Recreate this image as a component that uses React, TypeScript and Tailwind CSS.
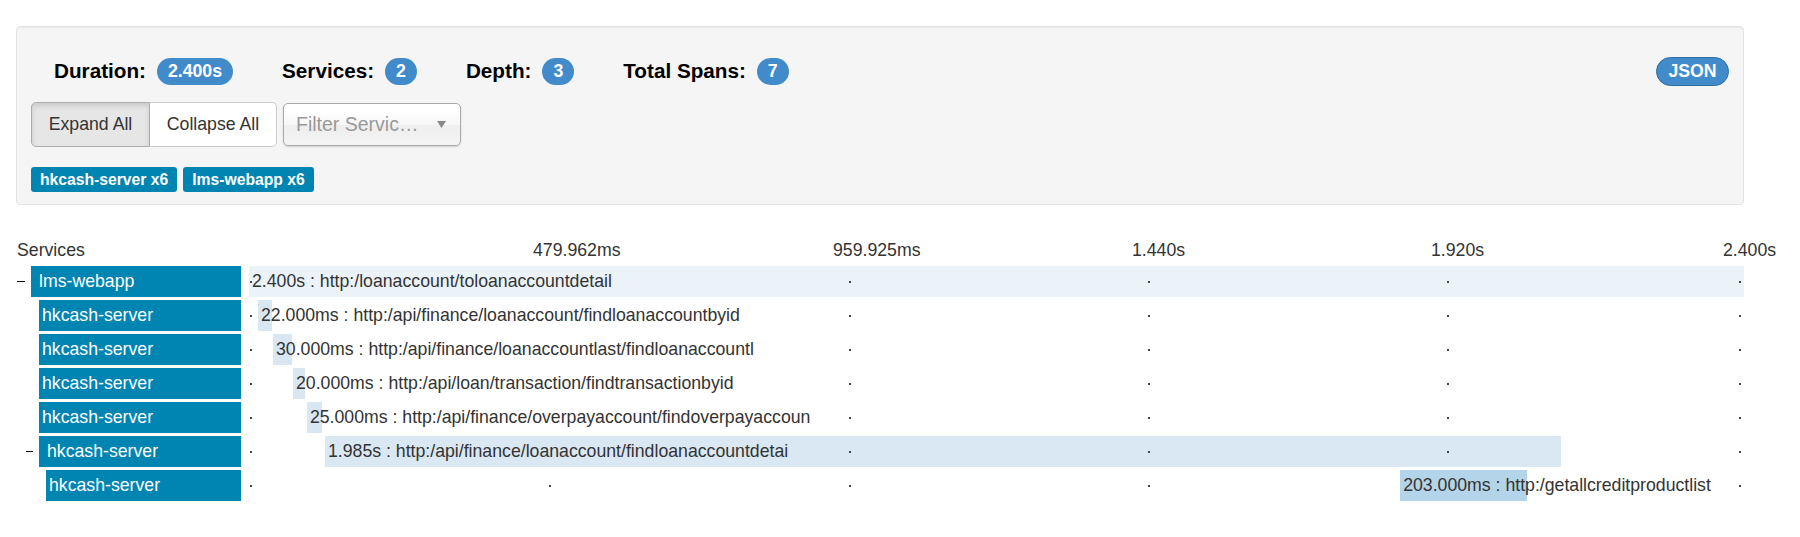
import React from 'react';

const SCALE = 1495 / 2400; // px per ms

const ticks = [
  { label: '479.962ms', x: 300 },
  { label: '959.925ms', x: 600 },
  { label: '1.440s', x: 899 },
  { label: '1.920s', x: 1198 },
  { label: '2.400s', x: 1490 },
];
const dotX = [1, 300, 600, 899, 1198, 1490];

type Span = {
  name: string;
  rowPl: string;
  expander?: string;
  textPl: string;
  start: number;
  dur: number;
  text: string;
  bar: string;
  hide: number[];
};

const spans: Span[] = [
  { name: 'lms-webapp', rowPl: 'pl-[17px]', expander: 'w-[8px] mr-[6px]', textPl: 'pl-[8px]', start: 0, dur: 2400, text: '2.400s : http:/loanaccount/toloanaccountdetail', bar: 'bg-[#ebf3f9]', hide: [1] },
  { name: 'hkcash-server', rowPl: 'pl-[39px]', textPl: 'pl-[3px]', start: 14.4, dur: 22, text: '22.000ms : http:/api/finance/loanaccount/findloanaccountbyid', bar: 'bg-[#d9e7f2]', hide: [1] },
  { name: 'hkcash-server', rowPl: 'pl-[39px]', textPl: 'pl-[3px]', start: 38.5, dur: 30, text: '30.000ms : http:/api/finance/loanaccountlast/findloanaccountl', bar: 'bg-[#d9e7f2]', hide: [1] },
  { name: 'hkcash-server', rowPl: 'pl-[39px]', textPl: 'pl-[3px]', start: 70.6, dur: 20, text: '20.000ms : http:/api/loan/transaction/findtransactionbyid', bar: 'bg-[#d9e7f2]', hide: [1] },
  { name: 'hkcash-server', rowPl: 'pl-[39px]', textPl: 'pl-[3px]', start: 93, dur: 25, text: '25.000ms : http:/api/finance/overpayaccount/findoverpayaccoun', bar: 'bg-[#d9e7f2]', hide: [1] },
  { name: 'hkcash-server', rowPl: 'pl-[26px]', expander: 'w-[7px] mr-[6px]', textPl: 'pl-[8px]', start: 122, dur: 1985, text: '1.985s : http:/api/finance/loanaccount/findloanaccountdetai', bar: 'bg-[#d9e8f3]', hide: [1] },
  { name: 'hkcash-server', rowPl: 'pl-[46px]', textPl: 'pl-[3px]', start: 1848, dur: 203, text: '203.000ms : http:/getallcreditproductlist', bar: 'bg-[#b3d4e9]', hide: [4] },
];

function Stat({ label, value, first }: { label: string; value: string; first?: boolean }) {
  return (
    <div className={`flex items-center ${first ? '' : 'ml-[49px]'}`}>
      <span className="text-[20.7px] font-bold text-black">{label}</span>
      <span className="ml-[11px] flex h-[27px] min-w-[31px] items-center justify-center rounded-full bg-[#428bca] px-[11px] text-[17.7px] font-bold text-white">
        {value}
      </span>
    </div>
  );
}

export default function App() {
  return (
    <div className="min-h-[537px] bg-white font-['Liberation_Sans',Arial,sans-serif] text-[17.7px] text-[#333]">
      {/* trace summary */}
      <div className="ml-[16px] w-[1728px] pt-[26px]">
        <div className="h-[179px] rounded-[4px] border border-[#e3e3e3] bg-[#f5f5f5] px-[14px] pt-[29px] shadow-[inset_0_1px_1px_rgba(0,0,0,0.05)]">
          <div className="flex h-[30px] items-center pl-[23px]">
            <Stat label="Duration:" value="2.400s" first />
            <Stat label="Services:" value="2" />
            <Stat label="Depth:" value="3" />
            <Stat label="Total Spans:" value="7" />
            <button className="ml-auto flex h-[29px] w-[73px] items-center justify-center rounded-full border border-[#2e6da4] bg-[#428bca] text-[17.7px] font-bold text-white">
              JSON
            </button>
          </div>

          <div className="mt-[16px] flex h-[45px] items-stretch">
            <button className="w-[119px] rounded-l-[5px] border border-[#adadad] bg-[#e6e6e6] text-[#333] shadow-[inset_0_3px_5px_rgba(0,0,0,0.125)]">
              Expand All
            </button>
            <button className="w-[127px] rounded-r-[5px] border border-l-0 border-[#ccc] bg-white text-[#333]">
              Collapse All
            </button>
            <div className="ml-[6px] mt-[1px] flex h-[43px] w-[178px] items-center rounded-[5px] border border-[#aaa] bg-[linear-gradient(#fff_20%,#f6f6f6_50%,#eee_52%,#f4f4f4_100%)] pl-[12px] pr-[14px] shadow-[0_1px_2px_rgba(0,0,0,0.15)]">
              <span className="flex-1 whitespace-nowrap text-[19.5px] text-[#999]">Filter Servic…</span>
              <svg width="9" height="7" viewBox="0 0 9 7">
                <path d="M0 0 L9 0 L4.5 7 Z" fill="#888" />
              </svg>
            </div>
          </div>

          <div className="mt-[20px] flex gap-[6px]">
            <span className="flex h-[25px] items-center rounded-[3px] bg-[#0085b2] px-[9px] text-[15.7px] font-bold text-white">hkcash-server x6</span>
            <span className="flex h-[25px] items-center rounded-[3px] bg-[#0085b2] px-[9px] text-[15.7px] font-bold text-white">lms-webapp x6</span>
          </div>
        </div>
      </div>

      {/* timeline */}
      <div className="mt-[33px]">
        <div className="flex h-[24px] items-center">
          <div className="w-[249px] pl-[17px]">Services</div>
          <div className="relative h-full w-[1495px]">
            {ticks.map((t) => (
              <span key={t.label} className="absolute top-0 leading-[24px]" style={{ left: t.x - 16 }}>
                {t.label}
              </span>
            ))}
          </div>
        </div>

        <div className="mt-[4px]">
          {spans.map((s, i) => (
            <div key={i} className="mb-[3px] flex h-[31px]">
              <div className={`flex w-[241px] items-center ${s.rowPl}`}>
                {s.expander && <div className={`h-[1px] bg-black ${s.expander}`} />}
                <div className={`flex h-full flex-1 items-center bg-[#0085b2] text-white ${s.textPl}`}>{s.name}</div>
              </div>
              <div className="relative ml-[8px] h-full w-[1495px]">
                <div
                  className={`h-full whitespace-nowrap leading-[31px] ${s.bar}`}
                  style={{ marginLeft: s.start * SCALE, width: s.dur * SCALE }}
                >
                  <span className="pl-[3px]">{s.text}</span>
                </div>
                {dotX.map((x, k) =>
                  s.hide.includes(k) ? null : (
                    <div key={k} className="absolute top-[15px] z-10 h-[2px] w-[2px] bg-[#444]" style={{ left: x }} />
                  )
                )}
              </div>
            </div>
          ))}
        </div>
      </div>
    </div>
  );
}
